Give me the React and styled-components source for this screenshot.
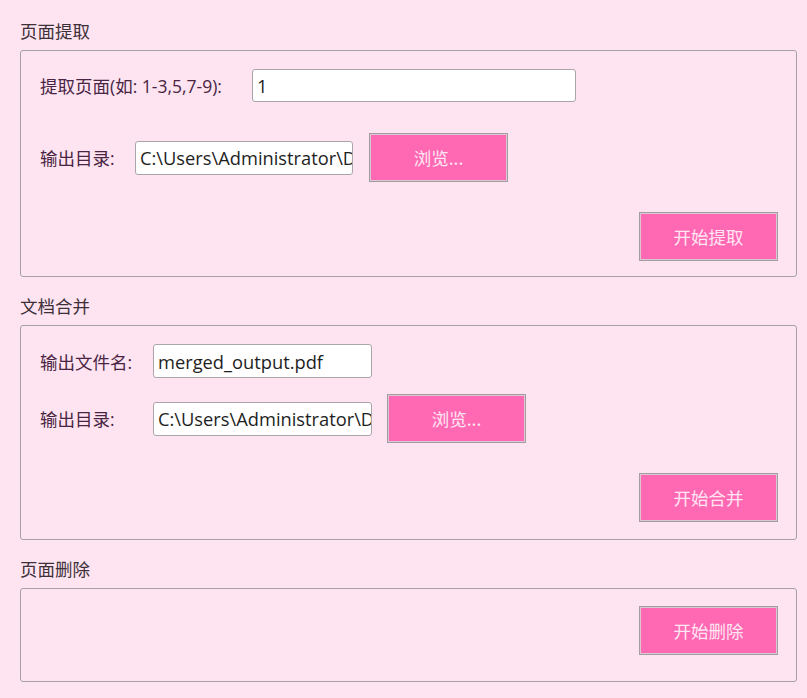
import React from "react";
import styled, { createGlobalStyle } from "styled-components";

const Global = createGlobalStyle`
  html, body { margin: 0; padding: 0; background: #fde4f0; }
  body { font-family: "Microsoft YaHei", "Noto Sans CJK SC", sans-serif; }
`;

const Page = styled.div`
  width: 807px;
  min-height: 698px;
  box-sizing: border-box;
  padding: 19px 10px 0 20px;
  background: #fde4f0;
  display: flex;
  flex-direction: column;
  gap: 17px;
`;

const Section = styled.section`
  display: flex;
  flex-direction: column;
  gap: 7px;
`;

const Title = styled.div`
  height: 24px;
  line-height: 24px;
  font-size: 17.5px;
  color: #3e3039;
`;

const GroupBox = styled.div`
  box-sizing: border-box;
  border: 1px solid #a4a0a3;
  border-radius: 3px;
  padding: ${(p) => p.$pad || "18px 18px 15px 19px"};
  display: flex;
  flex-direction: column;
  gap: ${(p) => p.$gap || "30px"};
`;

const Row = styled.div`
  display: flex;
  align-items: center;
  height: ${(p) => p.$h || "49px"};
  margin-top: ${(p) => p.$mt || "0"};
`;

const Label = styled.span`
  width: ${(p) => p.$w}px;
  flex: none;
  font-family: "Open Sans", "Noto Sans CJK SC", sans-serif;
  font-size: 17.5px;
  color: #4a2444;
  white-space: nowrap;
`;

const TextInput = styled.input`
  box-sizing: border-box;
  width: ${(p) => p.$w}px;
  height: ${(p) => p.$h || 33}px;
  border: 1px solid #aaa5a9;
  border-radius: 3px;
  background: #fff;
  padding: 0 0 0 4px;
  font-family: "Open Sans", "Noto Sans", sans-serif;
  font-size: 18.3px;
  color: #1e1e1e;
  outline: none;
`;

const PinkButton = styled.button`
  box-sizing: border-box;
  width: 139px;
  height: 49px;
  margin-left: ${(p) => p.$ml || 0}px;
  background: #ff69b4;
  border: 1px solid #a39ca0;
  box-shadow: inset 0 0 0 1px #dcc8d2;
  color: #ffe6f2;
  font-family: "Microsoft YaHei", "Noto Sans CJK SC", sans-serif;
  font-size: 17.5px;
  padding: 0;
  cursor: pointer;
`;

const Actions = styled.div`
  display: flex;
  justify-content: flex-end;
`;

export default function App() {
  return (
    <>
      <Global />
      <Page>
        <Section>
          <Title>页面提取</Title>
          <GroupBox $gap="30px">
            <Row $h="33px">
              <Label $w={212}>提取页面(如: 1-3,5,7-9):</Label>
              <TextInput $w={324} defaultValue="1" />
            </Row>
            <Row $mt="1px">
              <Label $w={95}>输出目录:</Label>
              <TextInput $w={218} $h={34} defaultValue="C:\Users\Administrator\Documents" />
              <PinkButton $ml={16}>浏览...</PinkButton>
            </Row>
            <Actions>
              <PinkButton>开始提取</PinkButton>
            </Actions>
          </GroupBox>
        </Section>

        <Section>
          <Title>文档合并</Title>
          <GroupBox $pad="18px 18px 17px 19px" $gap="30px">
            <Row $h="34px">
              <Label $w={113}>输出文件名:</Label>
              <TextInput $w={219} $h={34} defaultValue="merged_output.pdf" />
            </Row>
            <Row $mt="-14px">
              <Label $w={113}>输出目录:</Label>
              <TextInput $w={219} $h={34} defaultValue="C:\Users\Administrator\Documents" />
              <PinkButton $ml={15}>浏览...</PinkButton>
            </Row>
            <Actions>
              <PinkButton>开始合并</PinkButton>
            </Actions>
          </GroupBox>
        </Section>

        <Section>
          <Title>页面删除</Title>
          <GroupBox $pad="17px 18px 26px 19px">
            <Actions>
              <PinkButton>开始删除</PinkButton>
            </Actions>
          </GroupBox>
        </Section>
      </Page>
    </>
  );
}
